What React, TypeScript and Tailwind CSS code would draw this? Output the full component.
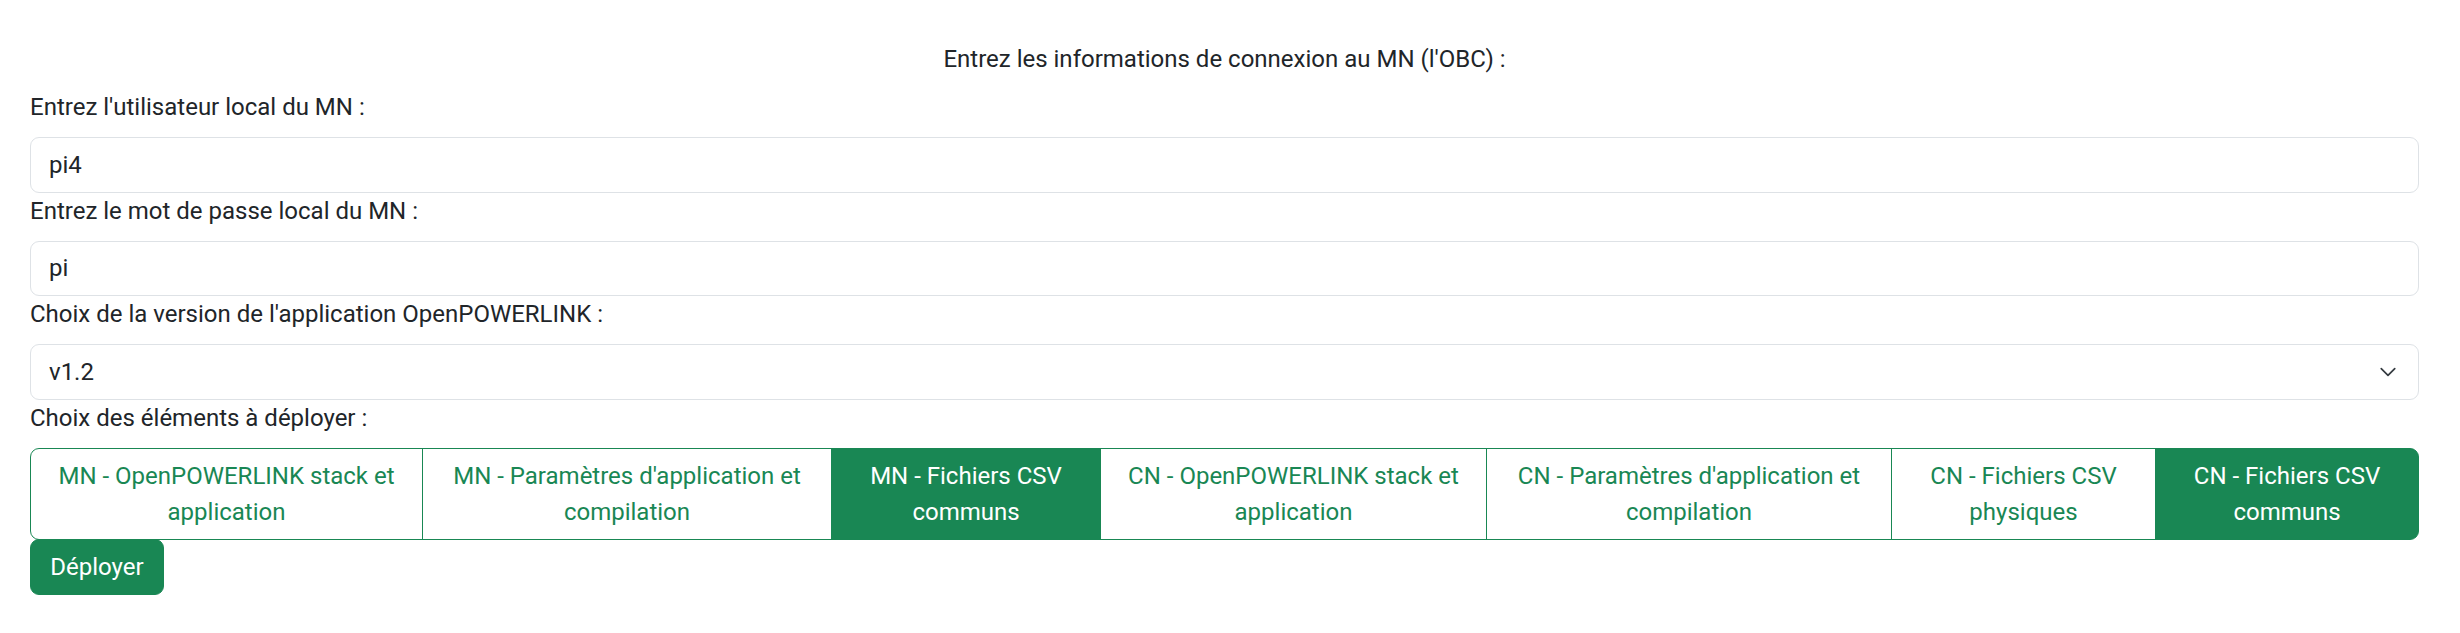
import { useState } from "react"

const choices = [
    { id: "mn-stack", lines: ["MN - OpenPOWERLINK stack et", "application"], width: "w-[393px]" },
    { id: "mn-params", lines: ["MN - Paramètres d'application et", "compilation"], width: "w-[410px]" },
    { id: "mn-csv", lines: ["MN - Fichiers CSV", "communs"], width: "w-[270px]" },
    { id: "cn-stack", lines: ["CN - OpenPOWERLINK stack et", "application"], width: "w-[387px]" },
    { id: "cn-params", lines: ["CN - Paramètres d'application et", "compilation"], width: "w-[406px]" },
    { id: "cn-phys", lines: ["CN - Fichiers CSV", "physiques"], width: "w-[265px]" },
    { id: "cn-csv", lines: ["CN - Fichiers CSV", "communs"], width: "w-[264px]" },
]

const fieldClass =
    "block w-full h-[55.5px] px-[18px] rounded-[9px] border border-[#dee2e6] bg-white text-[24px] leading-[36px] text-[#212529] outline-none"

export default function App() {
    const [user, setUser] = useState("pi4")
    const [password, setPassword] = useState("pi")
    const [version, setVersion] = useState("v1.2")
    const [selected, setSelected] = useState<string[]>(["mn-csv", "cn-csv"])

    const toggle = (id: string) =>
        setSelected((prev) => (prev.includes(id) ? prev.filter((x) => x !== id) : [...prev, id]))

    return (
        <div className="min-h-screen bg-white pt-[41px] pl-[30px] pr-[41px] font-['Roboto',sans-serif] text-[24px] leading-[36px] text-[#212529]">
            <p className="mb-3 text-center">Entrez les informations de connexion au MN (l'OBC) :</p>

            <label className="mb-3 block">Entrez l'utilisateur local du MN :</label>
            <input className={fieldClass} value={user} onChange={(e) => setUser(e.target.value)} />

            <label className="mb-3 block">Entrez le mot de passe local du MN :</label>
            <input className={fieldClass} value={password} onChange={(e) => setPassword(e.target.value)} />

            <label className="mb-3 block">Choix de la version de l'application OpenPOWERLINK :</label>
            <div className="relative">
                <select
                    className={`${fieldClass} appearance-none pr-[54px]`}
                    value={version}
                    onChange={(e) => setVersion(e.target.value)}
                >
                    <option value="v1.2">v1.2</option>
                    <option value="v2.7">v2.7</option>
                </select>
                <svg
                    className="pointer-events-none absolute right-[19px] top-1/2 -translate-y-1/2"
                    width="24"
                    height="18"
                    viewBox="0 0 16 16"
                    fill="none"
                >
                    <path d="m2 5 6 6 6-6" stroke="#343a40" strokeWidth="1.5" strokeLinecap="round" strokeLinejoin="round" />
                </svg>
            </div>

            <label className="mb-3 block">Choix des éléments à déployer :</label>
            <div className="flex">
                {choices.map((c, i) => {
                    const on = selected.includes(c.id)
                    return (
                        <button
                            key={c.id}
                            onClick={() => toggle(c.id)}
                            className={`${c.width} ${i > 0 ? "-ml-px" : ""} ${i === 0 ? "rounded-l-[9px]" : ""} ${
                                i === choices.length - 1 ? "rounded-r-[9px]" : ""
                            } ${
                                on ? "bg-[#198754] text-white" : "bg-white text-[#198754]"
                            } shrink-0 border border-[#198754] px-[18px] py-[9px] text-center leading-[36px]`}
                        >
                            {c.lines.map((l) => (
                                <span key={l} className="block whitespace-nowrap">
                                    {l}
                                </span>
                            ))}
                        </button>
                    )
                })}
            </div>

            <button className="mt-[-1px] w-[134px] rounded-[9px] border border-[#198754] bg-[#198754] py-[9px] text-center leading-[36px] text-white">
                Déployer
            </button>
        </div>
    )
}
